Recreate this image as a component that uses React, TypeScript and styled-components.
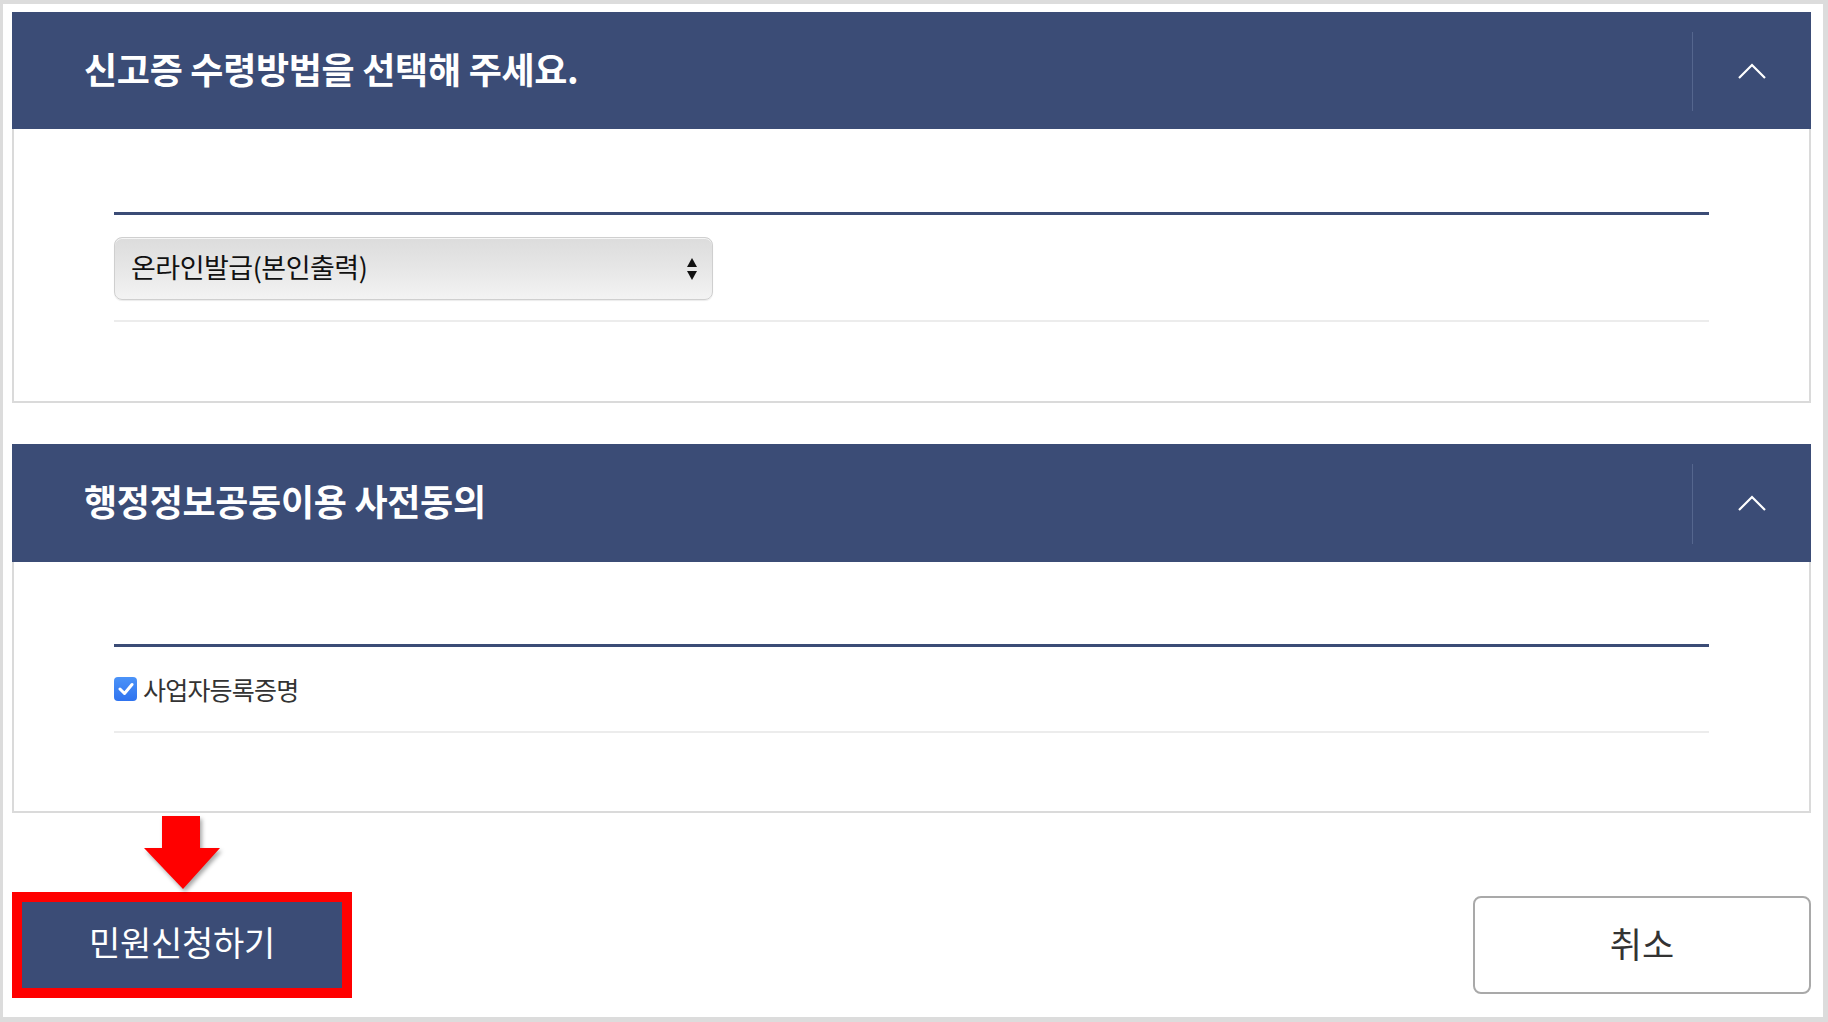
import React from 'react';
import styled, { createGlobalStyle } from 'styled-components';

const NAVY = '#3b4c76';

const GlobalStyle = createGlobalStyle`
  html, body {
    margin: 0;
    padding: 0;
    background: #fff;
  }
  body {
    font-family: "Noto Sans CJK KR", "Noto Sans", sans-serif;
  }
  * {
    box-sizing: border-box;
  }
`;

const Frame = styled.div`
  height: 100vh;
  border-style: solid;
  border-color: #dcdcdc;
  border-width: 4px 5px 5px 3px;
  padding: 8px 12px 17px 9px;
  display: flex;
  flex-direction: column;
`;

const Panel = styled.section`
  & + & {
    margin-top: 41px;
  }
`;

const PanelHeader = styled.div<{ $height: number }>`
  height: ${(p) => p.$height}px;
  background: ${NAVY};
  display: flex;
  align-items: center;
`;

const PanelTitle = styled.h2`
  flex: 1;
  margin: 0 0 6px;
  padding-left: 72px;
  color: #fff;
  font-size: 36px;
  font-weight: 700;
  letter-spacing: -0.3px;
`;

const HeaderDivider = styled.span`
  width: 1px;
  align-self: stretch;
  margin: 20px 0 18px;
  background: #55668e;
`;

const ToggleButton = styled.button`
  width: 118px;
  height: 100%;
  border: 0;
  padding: 0;
  background: transparent;
  display: flex;
  align-items: center;
  justify-content: center;
  cursor: pointer;
`;

const PanelBody = styled.div<{ $top: number; $bottom: number }>`
  border: 2px solid #dadada;
  border-top: 0;
  padding: ${(p) => p.$top}px 100px ${(p) => p.$bottom}px;
`;

const TopRule = styled.div`
  height: 3px;
  background: ${NAVY};
`;

const FieldRow = styled.div<{ $height?: number }>`
  display: flex;
  align-items: center;
  padding: 22px 0 20px;
  border-bottom: 2px solid #ececec;
  ${(p) => (p.$height ? `height: ${p.$height}px; padding: 0;` : '')}
`;

const SelectBox = styled.div`
  width: 599px;
  height: 63px;
  display: flex;
  align-items: center;
  justify-content: space-between;
  padding: 0 14px 4px 16px;
  border: 1px solid #cfcfcf;
  border-radius: 8px;
  background: linear-gradient(#dcdcdc 0%, #e6e6e6 48%, #f3f3f3 100%);
  box-shadow: inset 0 1px 0 rgba(255, 255, 255, 0.7), 0 1px 1px rgba(0, 0, 0, 0.08);
  color: #111;
  font-size: 27px;
  letter-spacing: -0.5px;

  svg {
    margin-top: 4px;
  }
`;

const CheckLabel = styled.label`
  display: flex;
  align-items: center;
  gap: 6px;
  color: #333;
  font-size: 25px;
  letter-spacing: -0.8px;
`;

const CheckMark = styled.span`
  width: 23px;
  height: 24px;
  border-radius: 4px;
  background: linear-gradient(#4b93f8, #2f73ef);
  display: flex;
  align-items: center;
  justify-content: center;
`;

const ActionRow = styled.div`
  margin-top: 79px;
  display: flex;
  align-items: center;
  justify-content: space-between;
`;

const Highlight = styled.div`
  position: relative;
  width: 340px;
  height: 106px;
  border: 10px solid #ff0000;
`;

const PrimaryButton = styled.button`
  width: 100%;
  height: 100%;
  border: 0;
  padding: 0 0 8px;
  background: ${NAVY};
  color: #fff;
  font-family: inherit;
  font-size: 34px;
  letter-spacing: -0.3px;
  cursor: pointer;
`;

const PointerArrow = styled.svg`
  position: absolute;
  left: 122px;
  top: -86px;
  overflow: visible;
  filter: drop-shadow(2px 3px 2px rgba(0, 0, 0, 0.35));
`;

const CancelButton = styled.button`
  width: 338px;
  height: 98px;
  border: 2px solid #a9a9a9;
  border-radius: 8px;
  padding: 0 0 6px;
  background: #fff;
  color: #333;
  font-family: inherit;
  font-size: 35px;
  cursor: pointer;
`;

const Chevron = () => (
  <svg width="30" height="18" viewBox="0 0 30 18">
    <polyline points="2,16 15,3 28,16" fill="none" stroke="#fff" strokeWidth="2.2" />
  </svg>
);

const SelectArrows = () => (
  <svg width="12" height="24" viewBox="0 0 12 24">
    <polygon points="6,1 11,10 1,10" fill="#111" />
    <polygon points="1,14 11,14 6,23" fill="#111" />
  </svg>
);

const App: React.FC = () => {
  return (
    <>
      <GlobalStyle />
      <Frame>
        <Panel>
          <PanelHeader $height={117}>
            <PanelTitle>신고증 수령방법을 선택해 주세요.</PanelTitle>
            <HeaderDivider />
            <ToggleButton aria-label="접기">
              <Chevron />
            </ToggleButton>
          </PanelHeader>
          <PanelBody $top={83} $bottom={79}>
            <TopRule />
            <FieldRow>
              <SelectBox>
                <span>온라인발급(본인출력)</span>
                <SelectArrows />
              </SelectBox>
            </FieldRow>
          </PanelBody>
        </Panel>

        <Panel>
          <PanelHeader $height={118}>
            <PanelTitle>행정정보공동이용 사전동의</PanelTitle>
            <HeaderDivider />
            <ToggleButton aria-label="접기">
              <Chevron />
            </ToggleButton>
          </PanelHeader>
          <PanelBody $top={82} $bottom={78}>
            <TopRule />
            <FieldRow $height={86}>
              <CheckLabel>
                <CheckMark>
                  <svg width="16" height="14" viewBox="0 0 16 14">
                    <polyline points="2,7 6.5,11.5 14,2.5" fill="none" stroke="#fff" strokeWidth="3" strokeLinecap="round" strokeLinejoin="round" />
                  </svg>
                </CheckMark>
                사업자등록증명
              </CheckLabel>
            </FieldRow>
          </PanelBody>
        </Panel>

        <ActionRow>
          <Highlight>
            <PointerArrow width="76" height="74" viewBox="0 0 76 74">
              <polygon points="18,0 56,0 56,32 76,32 39,73 0,32 18,32" fill="#ff0000" />
            </PointerArrow>
            <PrimaryButton>민원신청하기</PrimaryButton>
          </Highlight>
          <CancelButton>취소</CancelButton>
        </ActionRow>
      </Frame>
    </>
  );
};

export default App;
